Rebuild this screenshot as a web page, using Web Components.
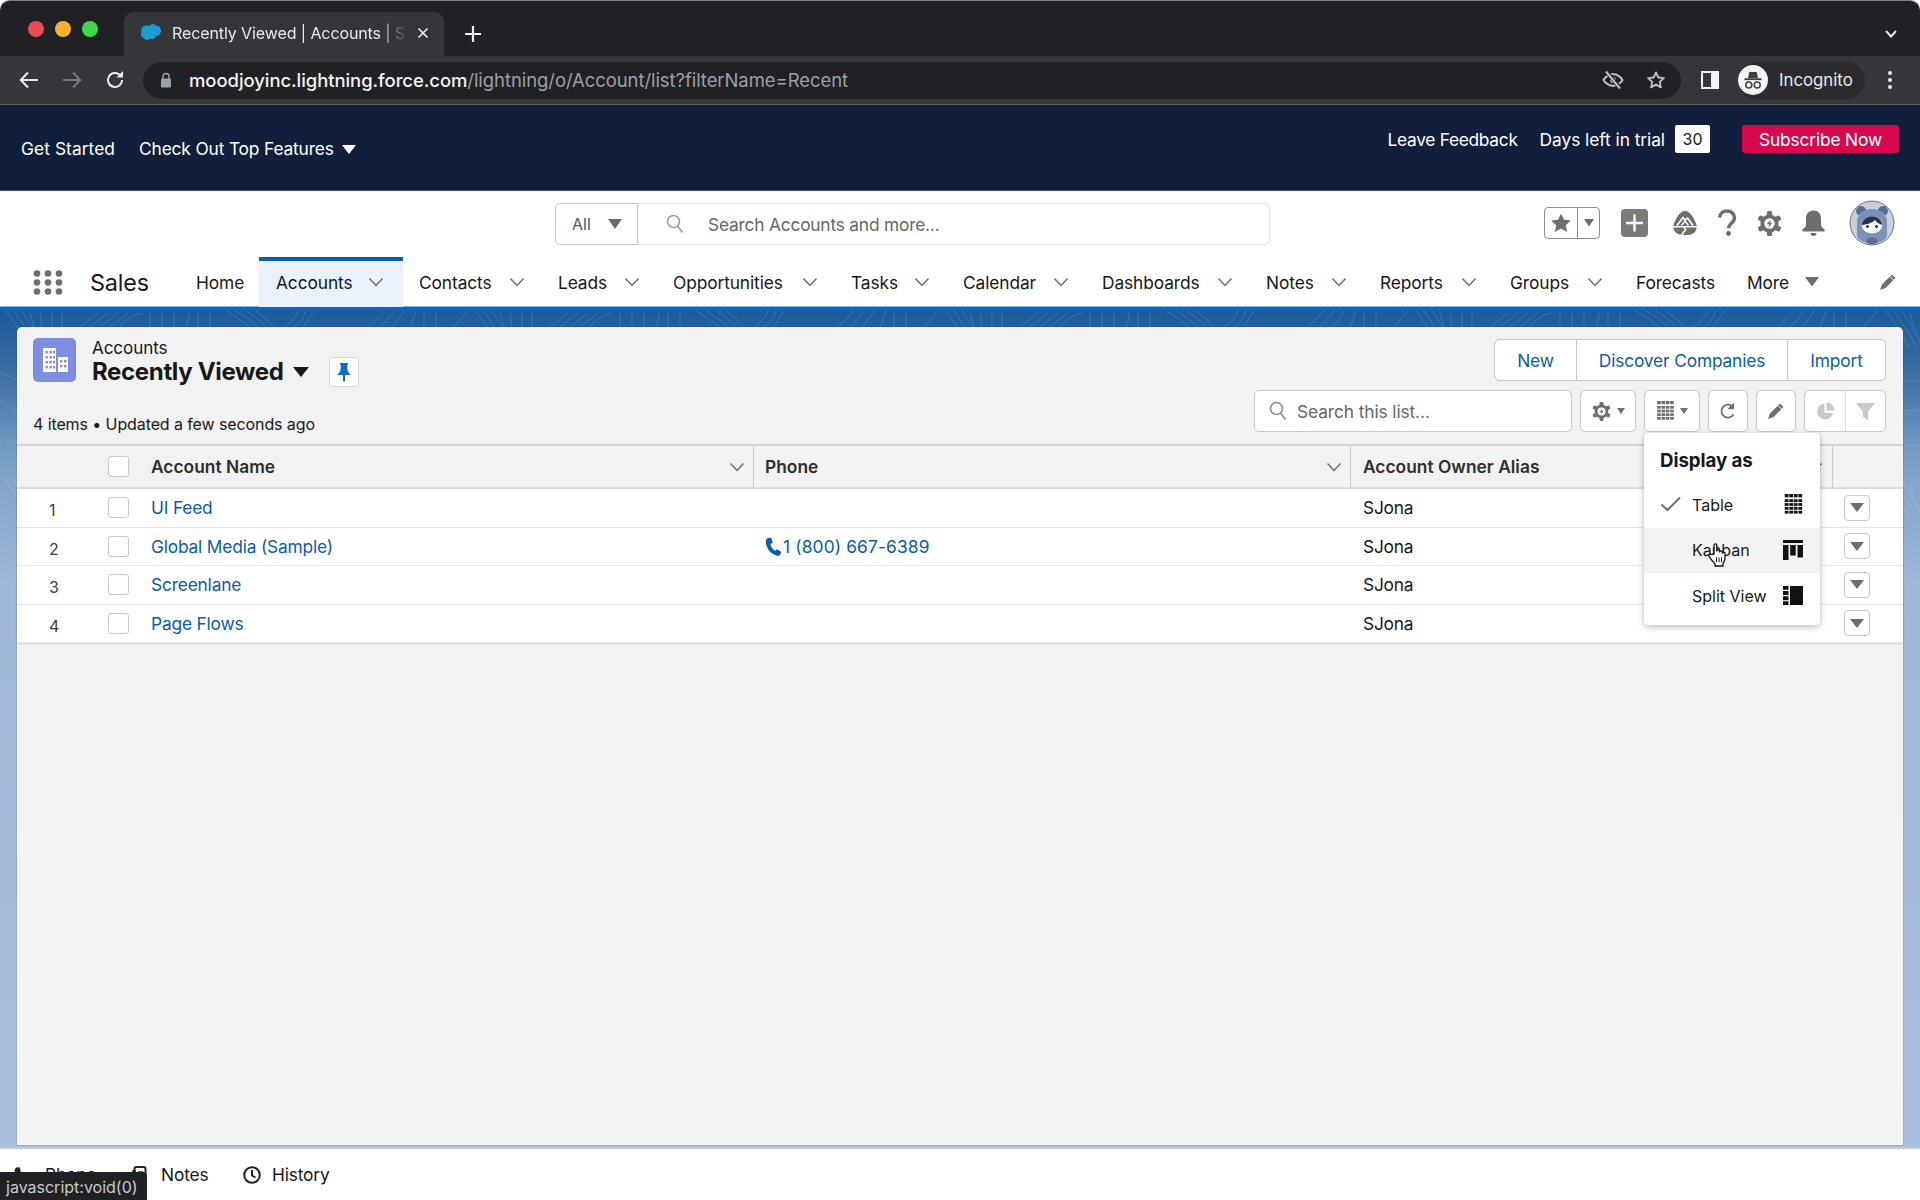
<!DOCTYPE html>
<html lang="en">
<head>
<meta charset="utf-8">
<title>Recently Viewed | Accounts | Salesforce</title>
<style>
  html,body{margin:0;padding:0;height:1200px;width:1920px;overflow:hidden;background:#fff}
  body{font-family:Inter,"Noto Sans",sans-serif;color:#181818;display:flex;flex-direction:column;position:relative}
  sf-main{flex:1;min-height:0}
</style>
</head>
<body>
<browser-chrome></browser-chrome>
<trial-banner></trial-banner>
<sf-header></sf-header>
<sf-nav>
  <nav-tab w="77" plain>Home</nav-tab>
  <nav-tab w="144" active>Accounts</nav-tab>
  <nav-tab w="139">Contacts</nav-tab>
  <nav-tab w="115">Leads</nav-tab>
  <nav-tab w="178">Opportunities</nav-tab>
  <nav-tab w="112">Tasks</nav-tab>
  <nav-tab w="139">Calendar</nav-tab>
  <nav-tab w="164">Dashboards</nav-tab>
  <nav-tab w="114">Notes</nav-tab>
  <nav-tab w="130">Reports</nav-tab>
  <nav-tab w="126">Groups</nav-tab>
  <nav-tab w="111" plain>Forecasts</nav-tab>
  <nav-tab w="105" more>More</nav-tab>
</sf-nav>
<sf-main>
  <list-panel>
    <account-row n="1" owner="SJona"><span slot="name">UI Feed</span></account-row>
    <account-row n="2" owner="SJona"><span slot="name">Global Media (Sample)</span><span slot="phone">1 (800) 667-6389</span></account-row>
    <account-row n="3" owner="SJona"><span slot="name">Screenlane</span></account-row>
    <account-row n="4" owner="SJona"><span slot="name">Page Flows</span></account-row>
    <display-menu slot="menu"></display-menu>
  </list-panel>
</sf-main>
<util-footer></util-footer>
<status-tip>javascript:void(0)</status-tip>

<script>
const GEAR = (c, hole='#fff') => {
  let t='';
  for (let k=0;k<6;k++) t+=`<rect x="9.500" y="0" width="5" height="6" rx="1.500" fill="${c}" transform="rotate(${k*60} 12 12)"/>`;
  return `${t}<circle cx="12" cy="12" r="8.700" fill="${c}"/><circle cx="12" cy="12" r="5" fill="${hole}"/><path d="M13 8.200l-3.600 4.600h2.200L11 16l3.600-4.800h-2.200z" fill="${c}"/>`;
};
const TABLEICON = (c) => { let s=''; for(let y=0;y<5;y++) for(let x=0;x<4;x++) s+=`<rect x="${x*5.2}" y="${y*4.4+(y?1.6:0)}" width="4.300" height="${y?3.200:3.800}" fill="${c}"/>`; return s; };

function define(name, html, setup) {
  customElements.define(name, class extends HTMLElement {
    constructor() {
      super();
      const root = this.attachShadow({mode:'open'});
      const t = document.createElement('template');
      t.innerHTML = typeof html === 'function' ? html(this) : html;
      root.appendChild(t.content.cloneNode(true));
    }
    connectedCallback() { if (setup) setup(this, this.shadowRoot); }
  });
}

define('browser-chrome', `
<style>
  :host{display:block;height:105px;background:#202124;color:#e8eaed;font:16px Inter,sans-serif;border-top:1px solid #77797d;box-sizing:border-box;border-bottom:1px solid #5d6168;border-radius:10px 10px 0 0;flex:none}
  .tabs{height:55px;display:flex;align-items:flex-end;padding-left:28px;position:relative}
  .lights{display:flex;gap:11px;align-self:flex-start;margin-top:20px;width:96px}
  .lights i{width:16px;height:16px;border-radius:50%}
  .tab{width:320px;height:44px;background:#35363a;border-radius:10px 10px 0 0;display:flex;align-items:center;box-sizing:border-box;padding:0 15px 2px 16px;gap:10px}
  .tab span{flex:1;white-space:nowrap;overflow:hidden;font-size:16px;letter-spacing:-.1px;-webkit-mask-image:linear-gradient(90deg,#000 88%,transparent 100%);mask-image:linear-gradient(90deg,#000 88%,transparent 100%)}
  .plus{margin:0 0 0 20px;height:44px;display:flex;align-items:center}
  .chev{margin-left:auto;margin-right:22px;height:44px;display:flex;align-items:center}
  .bar{height:48px;background:#35363a;display:flex;align-items:center;padding-left:19px}
  .nav{display:flex;gap:23px;width:124px;align-items:center}
  .addr{width:1538px;height:37px;border-radius:19px;background:#202124;display:flex;align-items:center;box-sizing:border-box;padding:0 15px 0 17px;flex:none}
  .url{margin-left:17px;font-size:18.47px;white-space:nowrap;color:#9aa0a6;letter-spacing:-.05px}
  .url b{font-weight:500;color:#f1f3f4}
  .end{margin-left:auto;display:flex;align-items:center;gap:22px}
  .panel{margin-left:20px}
  .pill{margin-left:19px;width:127px;height:37px;border-radius:19px;background:#2a2b2e;display:flex;align-items:center;font-size:16.8px;gap:11px;box-sizing:border-box;padding-left:0;flex:none}
  .pill em{font-style:normal}
  .dots{margin-left:22px}
</style>
<div class="tabs">
  <div class="lights"><i style="background:#ec4a57"></i><i style="background:#f6b42d"></i><i style="background:#3fd74b"></i></div>
  <div class="tab">
    <svg width="22" height="18" viewBox="0 0 22 18"><path d="M9 2a4 4 0 0 1 6.500-.4A5 5 0 0 1 21 6.500 5 5 0 0 1 16 12a4 4 0 0 1-5.800 2.600A4.600 4.600 0 0 1 3 13.500 4 4 0 0 1 1.500 8 4.500 4.500 0 0 1 4.500 2 4.500 4.500 0 0 1 9 2z" fill="#1b9ed8"/></svg>
    <span>Recently Viewed | Accounts | S</span>
    <svg width="12" height="12" viewBox="0 0 12 12"><path d="M1.500 1.500l9 9m0-9l-9 9" stroke="#e8eaed" stroke-width="1.700"/></svg>
  </div>
  <div class="plus"><svg width="18" height="18" viewBox="0 0 18 18"><path d="M9 1v16M1 9h16" stroke="#f1f3f4" stroke-width="2.200"/></svg></div>
  <div class="chev"><svg width="14" height="10" viewBox="0 0 14 10"><path d="M2 2l5 5.500L12 2" fill="none" stroke="#e8eaed" stroke-width="1.900"/></svg></div>
</div>
<div class="bar">
  <div class="nav">
    <svg width="20" height="18" viewBox="0 0 20 18"><path d="M19 9H2m7-7.500L1.700 9 9 16.500" fill="none" stroke="#e8eaed" stroke-width="2"/></svg>
    <svg width="20" height="18" viewBox="0 0 20 18"><path d="M1 9h17m-7-7.500L18.300 9 11 16.500" fill="none" stroke="#77797d" stroke-width="2"/></svg>
    <svg width="20" height="20" viewBox="0 0 20 20"><path d="M17 10a7 7 0 1 1-2.200-5.100" fill="none" stroke="#e8eaed" stroke-width="2"/><path d="M18 1v6.500h-6.500z" fill="#e8eaed"/></svg>
  </div>
  <div class="addr">
    <svg width="12" height="16" viewBox="0 0 12 16"><path d="M3 7V4.500a3 3 0 0 1 6 0V7" fill="none" stroke="#9aa0a6" stroke-width="1.500"/><rect x="1" y="6.500" width="10" height="9" rx="1" fill="#9aa0a6"/></svg>
    <div class="url"><b>moodjoyinc.lightning.force.com</b>/lightning/o/Account/list?filterName=Recent</div>
    <div class="end">
      <svg width="22" height="20" viewBox="0 0 22 20"><path d="M1.500 10S5 4 11 4s9.500 6 9.500 6-3.500 6-9.500 6S1.500 10 1.500 10z" fill="none" stroke="#bdc1c6" stroke-width="2"/><circle cx="11" cy="10" r="3" fill="#bdc1c6"/><path d="M4 1l14 17" stroke="#202124" stroke-width="4"/><path d="M4 1.500l14 17" stroke="#bdc1c6" stroke-width="2"/></svg>
      <svg width="20" height="20" viewBox="0 0 24 24"><path d="M12 2.800l2.800 6.200 6.700.7-5 4.500 1.400 6.600L12 17.400l-5.900 3.400 1.400-6.600-5-4.500 6.700-.7z" fill="none" stroke="#bdc1c6" stroke-width="2.200" stroke-linejoin="round"/></svg>
    </div>
  </div>
  <svg class="panel" width="18" height="18" viewBox="0 0 18 18"><rect width="18" height="18" fill="#f1f3f4"/><rect x="2" y="2" width="8" height="14" fill="#35363a"/></svg>
  <div class="pill">
    <svg width="30" height="30" viewBox="0 0 30 30"><circle cx="15" cy="15" r="15" fill="#f1f3f4"/><path d="M10 13l1.300-6h7.400L20 13z" fill="#3c4043"/><rect x="6.500" y="13.300" width="17" height="1.800" fill="#3c4043"/><circle cx="10.800" cy="20" r="3" fill="none" stroke="#3c4043" stroke-width="1.500"/><circle cx="19.200" cy="20" r="3" fill="none" stroke="#3c4043" stroke-width="1.500"/></svg>
    <em>Incognito</em>
  </div>
  <svg class="dots" width="6" height="20" viewBox="0 0 6 20"><circle cx="3" cy="3" r="2" fill="#e8eaed"/><circle cx="3" cy="10" r="2" fill="#e8eaed"/><circle cx="3" cy="17" r="2" fill="#e8eaed"/></svg>
</div>`);

define('trial-banner', `
<style>
  :host{display:flex;height:86px;background:#111f3c;color:#fff;font:17.33px Inter,sans-serif;box-sizing:border-box;padding:0 21px;justify-content:space-between;border-bottom:1px solid #44587a;letter-spacing:-.05px;flex:none}
  .l{display:flex;align-items:center;gap:24px;padding-top:1px}
  .g{letter-spacing:.08px}
  .k{letter-spacing:-.15px}
  .tri{display:inline-block;width:0;height:0;border:7.500px solid transparent;border-top:9px solid #fff;border-bottom:0;margin-left:8px;vertical-align:1px}
  .r{display:flex;align-items:flex-start;padding-top:20px;height:28px;line-height:29px}
  .c{background:#fff;color:#181818;width:35px;text-align:center;border-radius:2px;margin:0 32px 0 10px;font-size:16px;height:28px;line-height:28px}
  .s{background:#d6094f;border-radius:3px;width:157px;text-align:center;height:28px;letter-spacing:-.15px}
  .f{margin-right:22px;letter-spacing:-.3px}
</style>
<div class="l"><span class="g">Get Started</span><span class="k">Check Out Top Features<i class="tri"></i></span></div>
<div class="r"><span class="f">Leave Feedback</span><span>Days left in trial</span><span class="c">30</span><span class="s">Subscribe Now</span></div>`);

define('sf-header', `
<style>
  :host{display:flex;height:66px;background:#fff;align-items:flex-end;font:17.33px Inter,sans-serif;position:relative;box-sizing:border-box;padding-left:555px;flex:none}
  .search{display:flex;width:715px;height:42px;margin-bottom:12px}
  .all{width:83px;border:1px solid #c9c9c9;border-radius:5px 0 0 5px;box-sizing:border-box;display:flex;align-items:center;padding-left:16px;color:#555;font-size:16px;gap:17px}
  .tri{width:0;height:0;border:7px solid transparent;border-top:10px solid #6a6a6a;border-bottom:0}
  .inp{flex:1;border:1px solid #e2e2e2;border-left:0;border-radius:0 5px 5px 0;display:flex;align-items:center;padding-left:28px;gap:24px;color:#666;letter-spacing:-.2px}
  .icons{display:flex;align-items:center;margin-left:274px;margin-bottom:11px;height:46px}
  .fav{display:flex;width:56px;height:32px;border:1px solid #8c8c8c;border-radius:4px;box-sizing:border-box}
  .fav div{display:flex;align-items:center;justify-content:center}
  .fav div:first-child{width:32px;border-right:1px solid #8c8c8c}
  .fav div:last-child{flex:1}
  .plus{margin-left:21px}
  .i1{margin-left:24px}.i2{margin-left:19px}.i3{margin-left:20px}.i4{margin-left:19px}.av{margin-left:23px;flex:none}
</style>
<div class="search">
  <div class="all"><span>All</span><i class="tri"></i></div>
  <div class="inp"><svg width="18" height="20" viewBox="0 0 18 20"><circle cx="7.500" cy="7.500" r="6" fill="none" stroke="#9a9a9a" stroke-width="1.600"/><path d="M11.500 12l5 6.500" stroke="#9a9a9a" stroke-width="1.600"/></svg><span>Search Accounts and more...</span></div>
</div>
<div class="icons">
  <div class="fav"><div><svg width="22" height="22" viewBox="0 0 24 24"><path d="M12 1.500l3.200 7 7.600.8-5.700 5.100 1.600 7.500L12 18l-6.700 3.900 1.600-7.500L1.200 9.300l7.600-.8z" fill="#706e6b"/></svg></div><div><svg width="12" height="8" viewBox="0 0 12 8"><path d="M1 0h10L6 7.500z" fill="#706e6b"/></svg></div></div>
  <svg class="plus" width="27" height="28" viewBox="0 0 27 28"><rect width="27" height="28" rx="4" fill="#7d7b78"/><path d="M13.500 5.500v17M5 14h17" stroke="#fff" stroke-width="2.400"/></svg>
  <svg class="i1" width="26" height="26" viewBox="0 0 26 26"><path d="M13 1C10 1 7.500 3 5.500 6.500 4 9 2 13 1.200 16h23.600C24 13 22 9 20.500 6.500 18.500 3 16 1 13 1z" fill="#706e6b"/><path d="M5 15.500l6-8 2 2.800 2.500-2.300 5.500 7.500" fill="none" stroke="#fff" stroke-width="1.600" stroke-linejoin="round"/><path d="M9.500 15.500l3.500-4.500 3.500 4.500" fill="none" stroke="#fff" stroke-width="1.300"/><path d="M1.200 17.500h9.800l2 2.500-2.500 2-1 2.500C5 24.500 2 22 1.200 17.500zM13 17.500h11.800C24 22 21 24.500 17 24.900h-6l1-2.200 2.800-2.600z" fill="#706e6b"/></svg>
  <svg class="i2" width="20" height="28" viewBox="0 0 20 28"><path d="M2.500 8.500C3 4.500 6 2 10 2s7.500 2.800 7.500 6.800c0 5.500-6 5.500-6 10.500" fill="none" stroke="#706e6b" stroke-width="3.400"/><circle cx="11.500" cy="24.500" r="2.400" fill="#706e6b"/></svg>
  <svg class="i3" width="25" height="25" viewBox="0 0 24 24">${GEAR('#706e6b')}</svg>
  <svg class="i4" width="25" height="28" viewBox="0 0 25 28"><path d="M12.500 1.500c-4.500 0-7.500 3-7.500 8v6c0 2-1 3-3 4.500-1.500 1-.8 2.500 .5 2.500h20c1.300 0 2-1.500 .5-2.500-2-1.500-3-2.500-3-4.500v-6c0-5-3-8-7.500-8z" fill="#706e6b"/><path d="M9.500 24h6a3 3 0 0 1-6 0z" fill="#706e6b"/></svg>
  <svg class="av" width="46" height="46" viewBox="0 0 46 46"><defs><clipPath id="c"><circle cx="23" cy="23" r="21.500"/></clipPath></defs><circle cx="23" cy="23" r="23" fill="#fff"/><circle cx="23" cy="23" r="22" fill="#c5cfe2" stroke="#6b7487" stroke-width="1"/><g clip-path="url(#c)"><circle cx="12" cy="11" r="5" fill="#5a6c92"/><circle cx="34" cy="11" r="5" fill="#5a6c92"/><path d="M8 22c0-9 7-13 15-13s15 4 15 13v12c0 6-7 9-15 9S8 40 8 34z" fill="#7f90b6"/><ellipse cx="23" cy="25" rx="10.500" ry="8.500" fill="#fff"/><path d="M12.500 25c1-6 6-8.500 10.500-8.500S32.500 19 33.500 25c-4-1-6-3-7.500-5-1 2-7 4.500-13.500 5z" fill="#26324f"/><circle cx="18.500" cy="26.500" r="1.500" fill="#26324f"/><circle cx="27.500" cy="26.500" r="1.500" fill="#26324f"/><ellipse cx="23" cy="41" rx="6" ry="3.500" fill="#5a6c92"/></g></svg>
</div>`);

define('sf-nav', `
<style>
  :host{display:flex;height:54px;background:#fff;font:17.33px Inter,sans-serif;position:relative;box-sizing:border-box;border-bottom:4px solid #1262b8;box-shadow:inset 0 -1px 0 #7fb4e6;align-items:stretch;flex:none}
  .w{display:flex;align-items:center;justify-content:flex-end;padding-right:28px;box-sizing:border-box;width:90px;flex:none}
  .name{width:92px;font-size:23.4px;display:flex;align-items:center;color:#181818;letter-spacing:-.2px;flex:none}
  .p{margin-left:auto;margin-right:23px;align-self:center;flex:none}
  svg{display:block}
</style>
<div class="w"><svg width="30" height="25" viewBox="0 0 30 25" style="margin-right:-1px"><g fill="#706e6b"><circle cx="4" cy="3.500" r="3.300"/><circle cx="15" cy="3.500" r="3.300"/><circle cx="26" cy="3.500" r="3.300"/><circle cx="4" cy="12.500" r="3.300"/><circle cx="15" cy="12.500" r="3.300"/><circle cx="26" cy="12.500" r="3.300"/><circle cx="4" cy="21.500" r="3.300"/><circle cx="15" cy="21.500" r="3.300"/><circle cx="26" cy="21.500" r="3.300"/></g></svg></div>
<div class="name">Sales</div>
<slot></slot>
<svg class="p" width="18" height="18" viewBox="0 0 18 18"><path d="M13 1.500l3.500 3.500-10 10L1 17l2-5.500z" fill="#706e6b"/><path d="M11 3.500l3.500 3.500" stroke="#fff" stroke-width="1"/></svg>`);

define('nav-tab', el => `
<style>
  :host{display:flex;flex:none;box-sizing:border-box;width:${el.getAttribute('w')}px;align-items:center;padding-left:14px;padding-right:19px;position:relative;justify-content:space-between;color:#181818;letter-spacing:-.1px;white-space:nowrap}
  :host([active]){padding-left:17px;padding-bottom:4px;background:#e9f1fb;border-top:4px solid #0b5cab;margin-right:2px;width:144px}
  svg{flex:none}
</style>
<span><slot></slot></span>
${el.hasAttribute('plain') ? '' : el.hasAttribute('more')
  ? '<svg width="14" height="10" viewBox="0 0 14 10"><path d="M0 0h14L7 9.500z" fill="#706e6b"/></svg>'
  : '<svg width="16" height="10" viewBox="0 0 16 10"><path d="M1.500 1.500L8 8.500l6.500-7" fill="none" stroke="#706e6b" stroke-width="1.500"/></svg>'}
`);

define('sf-main', `
<style>
  :host{display:block;position:relative;background:linear-gradient(180deg,#1b5a9b 0,#34699f 50px,#7fa2c9 155px,#9db7d8 270px,#a8bedd 100%);padding:16px 17px 2px;box-sizing:border-box;overflow:hidden}
  svg{position:absolute;left:0;top:0}
  .in{position:relative;height:100%}
</style>
<svg width="1920" height="220" viewBox="0 0 1920 220"><defs><pattern id="p" width="470" height="170" patternUnits="userSpaceOnUse"><g fill="none" stroke="#fff" stroke-opacity=".14" stroke-width="1"><path d="M6 0c8 12 16 20 22 36M14 0c8 12 14 20 22 36M22 0c8 12 14 20 20 36"/><path d="M30 2l4 14M40 2l2 14M52 2v14M62 2v14"/><path d="M80 16L98 2M90 16l18-14M100 16l18-14M110 16l18-14M120 16c6-8 12-12 22-14"/><path d="M150 16V2M162 16V2M174 16V2M186 16c2-6 4-10 2-14M198 16V2M210 16V2"/><path d="M226 0c10 6 20 12 26 20M236 0c10 6 20 12 24 20M246 0c10 6 18 12 22 20M256 0c8 6 16 12 20 20M280 18c8-4 14-8 18-18M290 18c8-4 12-8 16-18M300 18c6-4 8-10 14-18"/><path d="M368 16c6-6 10-10 16-16M380 16c6-6 10-10 14-16M392 16c6-6 8-10 12-16M410 16c2-4 4-10 6-16M424 16V2M436 16V2M452 18c6-6 8-10 16-18"/></g><g fill="none" stroke="#fff" stroke-opacity=".1" stroke-width="1"><path d="M0 60c40 30 80-20 120 10s80-20 120 10 80-20 120 10 80-20 110 10"/><path d="M0 90c40 30 80-20 120 10s80-20 120 10 80-20 120 10 80-20 110 10"/><path d="M0 125c40 30 80-20 120 10s80-20 120 10 80-20 120 10 80-20 110 10"/></g></pattern></defs><rect width="1920" height="220" fill="url(#p)"/></svg>
<div class="in"><slot></slot></div>`);

define('list-panel', `
<style>
  :host{display:block;height:100%;background:#f2f2f2;border-radius:5px 5px 0 0;position:relative;box-shadow:0 0 0 1px rgba(0,0,0,.08);font:17.33px Inter,sans-serif;letter-spacing:-.1px}
  .top{height:117px;box-sizing:border-box;padding:11px 17px 0 16px;display:flex;justify-content:space-between}
  .title{display:flex}
  .tile{width:43px;height:44px;border-radius:5px;background:#7f8de1;display:flex;align-items:center;justify-content:center}
  .tt{margin-left:16px}
  .kick{font-size:17.1px;line-height:20px;margin-top:0}
  .h{display:flex;align-items:center;font-size:24px;font-weight:700;line-height:30px;letter-spacing:-.35px;margin-top:-1px}
  .tri{width:0;height:0;border:8px solid transparent;border-top:10px solid #181818;border-bottom:0;margin:0 20px 0 9px}
  .pin{width:30px;height:30px;background:#fff;border:1px solid #d8d8d8;border-radius:4px;box-sizing:border-box;display:flex;align-items:center;justify-content:center}
  .meta{font-size:16px;margin-top:27px;line-height:20px}
  .right{display:flex;flex-direction:column;align-items:flex-end;gap:9px;padding-top:1px}
  .grp{display:flex;height:42px;background:#fff;border:1px solid #c9c9c9;border-radius:5px;box-sizing:border-box;color:#0b5cab;letter-spacing:-.15px}
  .grp span{display:flex;align-items:center;justify-content:center;border-left:1px solid #c9c9c9}
  .grp span:first-child{border-left:0}
  .tools{display:flex;height:42px;gap:8px}
  .tb{background:#fff;border:1px solid #c9c9c9;border-radius:5px;box-sizing:border-box;display:flex;align-items:center;justify-content:center;gap:6px}
  .sr{width:318px;justify-content:flex-start;padding-left:14px;gap:10px;color:#666}
  .tb i{width:0;height:0;border:4.500px solid transparent;border-top:6px solid #706e6b;border-bottom:0}
  .head{display:grid;grid-template-columns:72px 50px 615px 597px 482px 70px;height:45px;box-sizing:border-box;border-top:2px solid #d4d4d4;border-bottom:2px solid #dcdcdc;font-weight:600;color:#2e2e2e;background:#f2f2f2;letter-spacing:.03px}
  .head>div{display:flex;align-items:center;justify-content:space-between;padding:0 8px 0 12px;box-sizing:border-box;border-right:1px solid #c9c9c9}
  .head>div.n{border:0}
  .cb{width:21px;height:21px;background:#fff;border:1px solid #c9c9c9;border-radius:3px;box-sizing:border-box}
  .rows{background:#fff;box-shadow:0 1px 2px rgba(0,0,0,.12)}
</style>
<div class="top">
  <div>
    <div class="title">
      <div class="tile"><svg width="28" height="26" viewBox="0 0 28 26"><g fill="#fff"><path d="M2 1h13v24H2zM17 10h10v15H17z"/></g><g fill="#7f8de1"><rect x="4.500" y="4" width="2.400" height="2.400"/><rect x="8.500" y="4" width="2.400" height="2.400"/><rect x="12" y="4" width="2" height="2.400"/><rect x="4.500" y="9" width="2.400" height="2.400"/><rect x="8.500" y="9" width="2.400" height="2.400"/><rect x="12" y="9" width="2" height="2.400"/><rect x="4.500" y="14" width="2.400" height="2.400"/><rect x="8.500" y="14" width="2.400" height="2.400"/><rect x="12" y="14" width="2" height="2.400"/><rect x="4.500" y="19" width="2.400" height="2.400"/><rect x="8.500" y="19" width="2.400" height="2.400"/><rect x="12" y="19" width="2" height="2.400"/><rect x="19" y="13" width="2.500" height="2.400"/><rect x="23" y="13" width="2.500" height="2.400"/><rect x="19" y="18" width="2.500" height="2.400"/><rect x="23" y="18" width="2.500" height="2.400"/></g></svg></div>
      <div class="tt">
        <div class="kick">Accounts</div>
        <div class="h"><span>Recently Viewed</span><i class="tri"></i><span class="pin"><svg width="14" height="20" viewBox="0 0 14 20"><path d="M3 1h8v1.500l-1 .8.8 6.200 2.200 2.500v1H8v6l-1 1-1-1v-6H1v-1l2.200-2.500L4 3.300l-1-.8z" fill="#0b6dc6"/></svg></span></div>
      </div>
    </div>
    <div class="meta">4 items • Updated a few seconds ago</div>
  </div>
  <div class="right">
    <div class="grp"><span style="width:81px">New</span><span style="width:210px">Discover Companies</span><span style="width:97px">Import</span></div>
    <div class="tools">
      <div class="tb sr"><svg width="18" height="20" viewBox="0 0 18 20"><circle cx="7.500" cy="7.500" r="6" fill="none" stroke="#8a8a8a" stroke-width="1.600"/><path d="M11.500 12l5 6.500" stroke="#8a8a8a" stroke-width="1.600"/></svg><span>Search this list...</span></div>
      <div class="tb" style="width:56px"><svg width="19" height="19" viewBox="0 0 24 24">${GEAR('#706e6b')}</svg><i></i></div>
      <div class="tb" style="width:56px"><svg width="17" height="20" viewBox="0 0 20 24">${TABLEICON('#706e6b')}</svg><i></i></div>
      <div class="tb" style="width:40px"><svg width="18" height="20" viewBox="0 0 18 20"><path d="M14.500 13.500A6.500 6.500 0 1 1 13 5" fill="none" stroke="#706e6b" stroke-width="1.800"/><path d="M15 1.500v6.800H8.500z" fill="#706e6b"/></svg></div>
      <div class="tb" style="width:40px"><svg width="18" height="18" viewBox="0 0 18 18"><path d="M13 1.500l3.500 3.500-10 10L1 17l2-5.500z" fill="#706e6b"/><path d="M11 3.500l3.500 3.500" stroke="#fff" stroke-width="1"/></svg></div>
      <div class="tb" style="width:82px;gap:0;justify-content:stretch">
        <div style="width:40px;height:100%;display:flex;align-items:center;justify-content:center;border-right:1px solid #d8d8d8"><svg width="19" height="19" viewBox="0 0 19 19"><path d="M8.500 1.500A8 8 0 1 0 17 11H8.500z" fill="#c9c9c9"/><path d="M10.500 .5a8 8 0 0 1 8 8h-8z" fill="#c9c9c9"/></svg></div>
        <div style="flex:1;height:100%;display:flex;align-items:center;justify-content:center"><svg width="19" height="19" viewBox="0 0 19 19"><path d="M0 1h19l-7 9v8l-5-3v-5z" fill="#c9c9c9"/></svg></div>
      </div>
    </div>
  </div>
</div>
<div class="head">
  <div class="n"></div>
  <div class="n"><span class="cb" style="margin-left:7px"></span></div>
  <div><span>Account Name</span><svg width="16" height="10" viewBox="0 0 16 10"><path d="M1.500 1.500L8 8.500l6.500-7" fill="none" stroke="#706e6b" stroke-width="1.500"/></svg></div>
  <div style="padding-left:11px"><span>Phone</span><svg width="16" height="10" viewBox="0 0 16 10"><path d="M1.500 1.500L8 8.500l6.500-7" fill="none" stroke="#706e6b" stroke-width="1.500"/></svg></div>
  <div style="padding-right:9px"><span>Account Owner Alias</span><svg width="16" height="10" viewBox="0 0 16 10"><path d="M1.500 1.500L8 8.500l6.500-7" fill="none" stroke="#706e6b" stroke-width="1.500"/></svg></div>
  <div class="n"></div>
</div>
<div class="rows"><slot></slot></div>
<slot name="menu"></slot>`);

define('account-row', el => `
<style>
  :host{display:grid;grid-template-columns:72px 50px 615px 597px 482px 70px;height:38.5px;box-sizing:border-box;border-bottom:1.500px solid #e5e5e5;align-items:center;background:#fff;font:17.33px Inter,sans-serif;letter-spacing:-.1px;color:#181818}
  .n{padding-left:32px;padding-top:5px;font-size:16px;color:#3e3e3e}
  .cb{width:21px;height:21px;background:#fff;border:1px solid #c9c9c9;border-radius:3px;box-sizing:border-box;margin-left:19px}
  .a{padding-left:12px;color:#0b5cab;letter-spacing:-.18px}
  .p{padding-left:11px;color:#0b5cab;display:flex;align-items:center;letter-spacing:.15px}
  .p svg{display:none}
  .p.has svg{display:block}
  .o{padding-left:12px;letter-spacing:-.2px}
  .b{width:26px;height:26px;margin-left:11px;border:1px solid #c9c9c9;border-radius:4px;box-sizing:border-box;display:flex;align-items:center;justify-content:center;background:#fff}
</style>
<div class="n">${el.getAttribute('n')}</div>
<div><div class="cb"></div></div>
<div class="a"><slot name="name"></slot></div>
<div class="p ${el.querySelector('[slot=phone]') ? 'has' : ''}"><svg width="18" height="19" viewBox="0 0 17 18"><path d="M2.500 1L6 .8l1.200 4.500-2 1.500c.5 2.500 2 4.800 4.300 6.200l2-1.500 4 2.800-1.500 3c-1 .8-2.500.6-3.800 0C4.800 15.500 1.200 10.500.7 4.800.6 3.200 1.300 1.800 2.500 1z" fill="#0b5cab"/></svg><slot name="phone"></slot></div>
<div class="o">${el.getAttribute('owner')}</div>
<div><div class="b"><svg width="14" height="9" viewBox="0 0 14 9"><path d="M0 0h14L7 9z" fill="#706e6b"/></svg></div></div>`);

define('display-menu', `
<style>
  :host{position:absolute;left:1627px;top:106px;width:176px;height:192px;background:#fff;border-radius:4px;box-shadow:0 2px 6px rgba(0,0,0,.28);font:16px Inter,sans-serif;color:#181818;display:block;letter-spacing:0}
  h3{margin:0;font-size:18.67px;font-weight:700;height:36px;padding:16px 0 0 16px;line-height:24px;color:#181818;letter-spacing:-.05px}
  .it{display:flex;align-items:center;height:45.500px;padding-left:48px;padding-right:17px;justify-content:space-between;position:relative}
  .hi{background:#f3f3f3}
  .ck{position:absolute;left:16px;top:14px}
  .cur{position:absolute;left:64px;top:14px}
</style>
<h3>Display as</h3>
<div class="it" style="margin-top:-3px">
  <svg class="ck" width="22" height="16" viewBox="0 0 22 16"><path d="M1.500 8.500L7.500 14 20 1.500" fill="none" stroke="#706e6b" stroke-width="2"/></svg>
  <span>Table</span>
  <svg width="19" height="21" viewBox="0 0 20 24">${TABLEICON('#111')}</svg>
</div>
<div class="it hi">
  <span>Kanban</span>
  <svg width="20" height="20" viewBox="0 0 20 20"><g fill="#111"><rect width="20" height="3"/><rect y="5" width="5.500" height="15"/><rect x="7.200" y="5" width="5.500" height="10.500"/><rect x="14.500" y="5" width="5.500" height="12.500"/></g></svg>
  <svg class="cur" width="20" height="25" viewBox="0 0 20 25"><path d="M6 12V3.200c0-1.700 2.800-1.700 2.800 0V9c0-1.500 2.800-1.500 2.800 0v1c0-1.500 2.800-1.500 2.800 0v1.200c0-1.300 2.600-1.300 2.600 .3v5c0 2.200-1 3.500-2 5V24H7v-2c-2-2.500-5-5.500-6-8-.5-1.500 1.200-2.500 2.400-1.300z" fill="#fff" stroke="#111" stroke-width="1.300" stroke-linejoin="round"/><path d="M8.500 15.500v4.500M11 15.500v4.500M13.500 15.500v4.500" stroke="#111" stroke-width="1"/></svg>
</div>
<div class="it">
  <span>Split View</span>
  <svg width="20" height="19" viewBox="0 0 20 19"><g fill="#111"><rect x="7" width="13" height="19"/><rect width="5.500" height="3.800"/><rect y="5" width="5.500" height="4"/><rect y="10.200" width="5.500" height="4"/><rect y="15.300" width="5.500" height="3.700"/></g></svg>
</div>`);

define('util-footer', `
<style>
  :host{display:flex;height:53px;background:#fff;box-sizing:border-box;border-top:2px solid #c9c9c9;align-items:center;font:17.33px Inter,sans-serif;color:#181818;padding-left:14px;letter-spacing:-.15px;flex:none}
  span{display:flex;align-items:center}
</style>
<span style="width:118px;gap:15px"><svg width="16" height="18" viewBox="0 0 17 18"><path d="M2.500 1L6 .8l1.200 4.500-2 1.500c.5 2.500 2 4.800 4.300 6.200l2-1.500 4 2.800-1.500 3c-1 .8-2.500.6-3.800 0C4.800 15.500 1.200 10.500.7 4.800.6 3.200 1.300 1.800 2.500 1z" fill="#222"/></svg>Phone</span>
<span style="width:111px;gap:13px"><svg width="16" height="18" viewBox="0 0 16 18"><rect x="2.500" y="1" width="11" height="16" rx="2" fill="none" stroke="#222" stroke-width="2"/><path d="M0 5h4M0 9h4M0 13h4M6 6h5" stroke="#222" stroke-width="1.500"/></svg>Notes</span>
<span style="gap:11px"><svg width="18" height="18" viewBox="0 0 18 18"><circle cx="9" cy="9" r="7.800" fill="none" stroke="#222" stroke-width="2"/><path d="M9 4v5.500l3.500 2" fill="none" stroke="#222" stroke-width="2"/></svg>History</span>`);

define('status-tip', `
<style>
  :host{position:absolute;left:0;top:1172px;width:147px;height:28px;background:#202124;color:#c8c9cb;font:16px Inter,sans-serif;box-sizing:border-box;padding:5px 0 0 6px;border-radius:0 4px 0 0;white-space:nowrap}
</style><slot></slot>`);
</script>
</body>
</html>
